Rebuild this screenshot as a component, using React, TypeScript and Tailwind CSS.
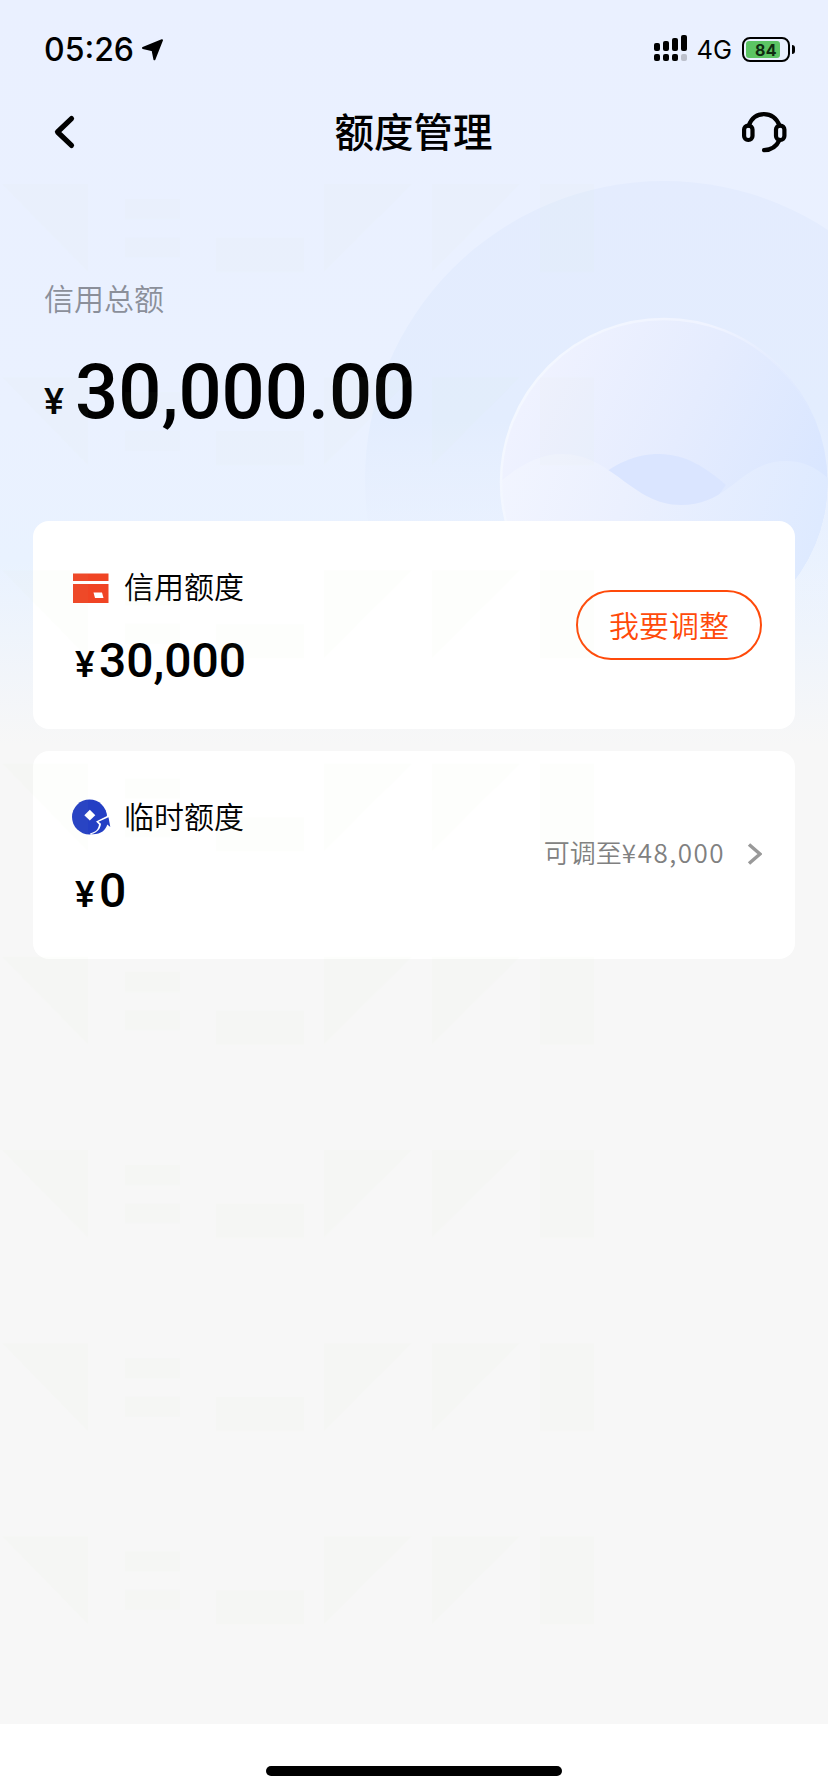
import React from "react";

interface QuotaCardProps {
  icon: React.ReactNode;
  title: string;
  amount: string;
  children: React.ReactNode;
}

function StatusBar() {
  return (
    <div className="flex h-[88px] items-center justify-between pt-[11px] pr-[33px] pl-[44px]">
      <div className="flex items-center gap-[7px]">
        <span className="font-['Inter',sans-serif] text-[32px] leading-none font-medium">
          05:26
        </span>
        <svg width="24" height="24" viewBox="0 0 24 24">
          <path
            d="M2 10 21 2.2 13.4 21.3 11.6 12.2Z"
            fill="#000"
            stroke="#000"
            strokeWidth="2"
            strokeLinejoin="round"
          />
        </svg>
      </div>
      <div className="flex items-center">
        <svg className="mb-[3px]" width="34" height="28" viewBox="0 0 34 28">
          <rect x="0" y="9" width="6" height="8" rx="2" />
          <rect x="9" y="7" width="6" height="10" rx="2" />
          <rect x="18" y="4" width="6" height="13" rx="2" />
          <rect x="27" y="1" width="6" height="16" rx="2" />
          <rect x="0" y="20" width="6" height="7" rx="2" />
          <rect x="9" y="20" width="6" height="7" rx="2" />
          <rect x="18" y="20" width="6" height="7" rx="2" />
          <rect x="27" y="20" width="6" height="7" rx="2" fill="#bcc0cc" />
        </svg>
        <span className="mt-[1px] ml-[9px] font-['Inter',sans-serif] text-[25.5px] leading-none">
          4G
        </span>
        <div className="ml-[10px] flex items-center">
          <div className="relative flex h-[25px] w-[48px] items-center rounded-[8px] border-2 border-black pl-[2px]">
            <div className="h-[17px] w-[34px] rounded-[3px] bg-[#5cc464]" />
            <span className="absolute inset-x-0 text-center font-['Inter',sans-serif] text-[16px] leading-none font-bold tracking-[0.5px] text-[#102a12]">
              84
            </span>
          </div>
          <div className="ml-[2px] h-[9px] w-[3px] rounded-r-full bg-black" />
        </div>
      </div>
    </div>
  );
}

function NavBar() {
  return (
    <div className="flex h-[88px] items-center justify-between pr-[41px] pl-[51px]">
      <svg width="35" height="36" viewBox="0 0 35 36" fill="none">
        <path
          d="M20.5 4.6 6.5 18 20.5 31.4"
          stroke="#000"
          strokeWidth="5.2"
          strokeLinecap="round"
          strokeLinejoin="round"
        />
      </svg>
      <h1 className="pb-[5px] text-[39.5px] leading-none font-medium">
        额度管理
      </h1>
      <svg
        width="46"
        height="42"
        viewBox="0 0 46 42"
        fill="none"
        stroke="#000"
        strokeWidth="4.2"
        strokeLinecap="round"
      >
        <rect x="3.1" y="14.6" width="8.4" height="14.4" rx="4" />
        <rect x="35" y="14.6" width="8.4" height="14.4" rx="4" />
        <path d="M7.8 14.5C10.5 7 16 3.1 23 3.1S35.5 7 38.5 14.5" />
        <path d="M38.5 29C35.5 35.5 30.5 39 23 39.2" />
      </svg>
    </div>
  );
}

function HeroArt() {
  return (
    <svg
      className="absolute inset-0"
      width="828"
      height="780"
      viewBox="0 0 828 780"
    >
      <defs>
        <linearGradient id="disc" x1="0" y1="0" x2="0" y2="1">
          <stop offset="0" stopColor="#e4ecfe" />
          <stop offset="0.4" stopColor="#e3edfe" />
          <stop offset="0.58" stopColor="#e8f0fe" stopOpacity="0.6" />
          <stop offset="0.75" stopColor="#f2f5fb" stopOpacity="0" />
        </linearGradient>
        <linearGradient id="ball" x1="0.1" y1="0.2" x2="0.95" y2="0.6">
          <stop offset="0" stopColor="#eff2ff" />
          <stop offset="0.5" stopColor="#e5ecfe" />
          <stop offset="1" stopColor="#d9e6ff" />
        </linearGradient>
        <linearGradient id="rim" x1="0" y1="0.2" x2="0.9" y2="0.5">
          <stop offset="0" stopColor="#f4f8ff" />
          <stop offset="0.6" stopColor="#eff3ff" />
          <stop offset="1" stopColor="#e4ecff" stopOpacity="0" />
        </linearGradient>
        <linearGradient id="wave" x1="0" y1="0" x2="1" y2="0.2">
          <stop offset="0" stopColor="#f2f5ff" />
          <stop offset="0.4" stopColor="#ebf0fe" />
          <stop offset="1" stopColor="#deeaff" />
        </linearGradient>
        <clipPath id="ballClip">
          <circle cx="664" cy="482" r="163.5" />
        </clipPath>
      </defs>
      <circle cx="664" cy="480" r="299" fill="url(#disc)" />
      <circle cx="664" cy="482" r="163.5" fill="url(#ball)" />
      <g clipPath="url(#ballClip)">
        <path
          d="M590 484C615 463 635 454 659 454 686 454 706 468 726 485L700 520H610Z"
          fill="#dae5ff"
        />
        <path
          d="M500 482C522 463 542 454 562 454 612 454 632 505 681 505 731 505 740 461 786 461 803 461 816 467 830 480V660H500Z"
          fill="url(#wave)"
        />
      </g>
      <circle
        cx="664"
        cy="482"
        r="163"
        fill="none"
        stroke="url(#rim)"
        strokeWidth="2.5"
      />
    </svg>
  );
}

// Faint repeating shapes laid over the whole page
function Watermark() {
  return (
    <svg
      className="pointer-events-none absolute top-[184px] left-0"
      width="620"
      height="1450"
    >
      <defs>
        <pattern
          id="mark"
          width="620"
          height="193.2"
          patternUnits="userSpaceOnUse"
        >
          <g fill="#c8dcaa" fillOpacity="0.03">
            <path d="M2 0H88V88Z" />
            <rect x="125" y="15" width="55" height="20" />
            <rect x="125" y="53.5" width="55" height="20" />
            <rect x="216" y="54" width="88" height="34" />
            <path d="M324 0H412L324 88Z" />
            <path d="M432 0H520L432 88Z" />
            <rect x="540" y="0" width="54" height="88" />
          </g>
        </pattern>
      </defs>
      <rect width="620" height="1450" fill="url(#mark)" />
    </svg>
  );
}

function CreditCardIcon() {
  return (
    <svg width="38" height="38" viewBox="0 0 38 38">
      <path d="M1 4.5H36.5V12H1Z" fill="#f04424" />
      <path d="M1 15H36.5V34H1Z" fill="#f04424" />
      <path d="M21.5 23.5H30L31.5 29H23Z" fill="#fff" />
    </svg>
  );
}

function CoinIcon() {
  return (
    <svg width="40" height="38" viewBox="0 0 40 38">
      <circle cx="17.5" cy="18" r="17.5" fill="#243fc4" />
      <path d="M17.8 10.8 23.3 16.2 17.8 21.6 12.3 16.2Z" fill="#fff" />
      <path
        d="M18 34.5C24 33 26.5 30 27 25.5L24 22.5 38 15.5 40 28V38H20Z"
        fill="#fff"
      />
      <path
        d="M19 35.2C26 33.5 28.5 29.5 29 24.8L26.5 22.8 36.5 18.2 38.3 28 35.3 25.6C33.5 31.5 28.5 36 19 35.2Z"
        fill="#243fc4"
      />
    </svg>
  );
}

function QuotaCard({ icon, title, amount, children }: QuotaCardProps) {
  return (
    <div className="flex h-[208px] items-center justify-between rounded-[16px] bg-white pr-[33px] pl-[39px]">
      <div className="pt-[6px]">
        <div className="flex items-center">
          <div className="w-[52px]">{icon}</div>
          <span className="pb-[5px] text-[30px] leading-[44px] font-[350]">
            {title}
          </span>
        </div>
        <div className="mt-[21px] flex items-baseline pl-[3px] font-['Roboto',sans-serif] leading-[56px] font-medium">
          <span className="w-[24px] text-[37px]">¥</span>
          <span className="text-[48px]">{amount}</span>
        </div>
      </div>
      {children}
    </div>
  );
}

export default function App() {
  return (
    <div className="relative flex h-[1792px] w-[828px] flex-col overflow-hidden bg-[#f7f7f7] font-['Noto_Sans_CJK_SC',sans-serif] text-black">
      <div className="absolute inset-x-0 top-0 h-[780px] bg-[linear-gradient(180deg,#eaf0ff_0px,#eaf1ff_420px,#e9f2ff_560px,#f7f7f7_745px)]">
        <HeroArt />
      </div>

      <div className="relative flex-1">
        <StatusBar />
        <NavBar />

        <div className="h-[345px] px-[44px] pt-[99px]">
          <p className="text-[30px] leading-[44px] font-[350] text-[#8b8f9a]">
            信用总额
          </p>
          <div className="mt-[29px] flex items-baseline font-['Roboto',sans-serif] leading-[88px] font-medium">
            <span className="relative -top-[4px] w-[31px] text-[37.5px]">
              ¥
            </span>
            <span className="text-[76px]">30,000.00</span>
          </div>
        </div>

        <div className="flex flex-col gap-[22px] px-[33px]">
          <QuotaCard icon={<CreditCardIcon />} title="信用额度" amount="30,000">
            <button className="h-[70px] w-[186px] rounded-full border-2 border-[#ff4a0a] pb-[3px] text-[30px] leading-none font-[350] text-[#ff4a0a]">
              我要调整
            </button>
          </QuotaCard>
          <QuotaCard icon={<CoinIcon />} title="临时额度" amount="0">
            <div className="flex items-center pb-[2px] text-[26px] leading-none font-[350] text-[#808080]">
              <span className="pb-[4px]">可调至</span>
              <span className="pb-[4px] tracking-[1.5px]">¥48,000</span>
              <svg
                className="ml-[21px]"
                width="16"
                height="24"
                viewBox="0 0 16 24"
                fill="none"
              >
                <path d="M3 2.5 14 12 3 21.5" stroke="#999" strokeWidth="3.5" />
              </svg>
            </div>
          </QuotaCard>
        </div>
      </div>

      <div className="relative flex h-[68px] items-end justify-center bg-white pb-[16px]">
        <div className="h-[10px] w-[296px] rounded-full bg-black" />
      </div>

      <Watermark />
    </div>
  );
}
